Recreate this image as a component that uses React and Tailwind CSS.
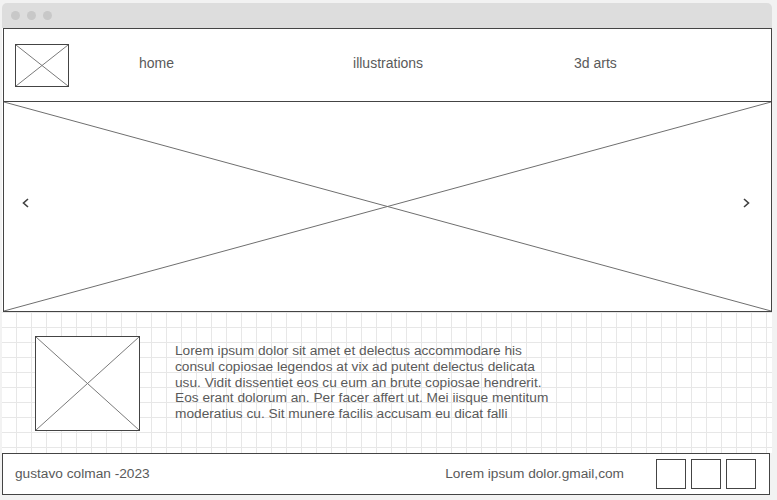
import React from 'react';

const gridBg =
  'bg-[linear-gradient(to_right,#e7e7e7_1px,transparent_1px),linear-gradient(to_bottom,#e7e7e7_1px,transparent_1px)] bg-[size:15px_15px] bg-[position:-1px_0]';

function Cross({ className, stroke = '#7a7a7a' }) {
  return (
    <svg className={className} viewBox="0 0 100 100" preserveAspectRatio="none">
      <line x1="0" y1="0" x2="100" y2="100" stroke={stroke} strokeWidth="1" vectorEffect="non-scaling-stroke" />
      <line x1="100" y1="0" x2="0" y2="100" stroke={stroke} strokeWidth="1" vectorEffect="non-scaling-stroke" />
    </svg>
  );
}

function Chevron({ dir }) {
  const points = dir === 'left' ? '6,1 1.5,5 6,9' : '1,1 5.5,5 1,9';
  return (
    <svg width="7" height="10" viewBox="0 0 7 10">
      <polyline points={points} fill="none" stroke="#3f3f3f" strokeWidth="1.6" />
    </svg>
  );
}

export default function App() {
  const lorem = [
    'Lorem ipsum dolor sit amet et delectus accommodare his',
    'consul copiosae legendos at vix ad putent delectus delicata',
    'usu. Vidit dissentiet eos cu eum an brute copiosae hendrerit.',
    'Eos erant dolorum an. Per facer affert ut. Mei iisque mentitum',
    'moderatius cu. Sit munere facilis accusam eu dicat falli',
  ];

  return (
    <div className="w-[777px] h-[500px] bg-[#f2f2f2] overflow-hidden font-['Liberation_Sans',Arial,sans-serif]">
      <div className="ml-[2px] pt-[3px] w-[770px]">
        {/* title bar */}
        <div className="h-[25px] rounded-t-[5px] bg-[#dddddd] flex items-center pl-[9px] gap-[7px]">
          <span className="w-[9px] h-[9px] rounded-full bg-[#c8c8c8]" />
          <span className="w-[9px] h-[9px] rounded-full bg-[#c8c8c8]" />
          <span className="w-[9px] h-[9px] rounded-full bg-[#c8c8c8]" />
        </div>

        <div className="bg-white">
          {/* header */}
          <header className="ml-px w-[769px] h-[74px] border border-[#444] bg-white flex items-center pl-[11px] text-[14px] text-[#5a5a5a]">
            <div className="w-[54px] h-[43px] border border-[#444] shrink-0">
              <Cross className="w-full h-full" />
            </div>
            <div className="flex items-center pb-[4px]">
              <span className="ml-[70px]">home</span>
              <span className="ml-[179px]">illustrations</span>
              <span className="ml-[151px]">3d arts</span>
            </div>
          </header>

          {/* hero */}
          <section className="relative ml-px w-[769px] h-[210px] border-x border-b border-[#444] bg-white">
            <Cross className="absolute inset-0 w-full h-full" stroke="#6f6f6f" />
            <div className="relative h-full flex items-center justify-between pl-[18px] pr-[21px] pb-[7px]">
              <Chevron dir="left" />
              <Chevron dir="right" />
            </div>
          </section>
        </div>

        {/* content */}
        <section className={`h-[141px] flex items-start pl-[33px] pt-[24px] bg-white ${gridBg}`}>
          <div className="w-[105px] h-[95px] border border-[#444] bg-white shrink-0">
            <Cross className="w-full h-full" />
          </div>
          <div className="ml-[35px] mt-[7px] text-[13.7px] leading-[15.8px] text-[#5a5a5a]">
            {lorem.map((line) => (
              <div key={line}>{line}</div>
            ))}
          </div>
        </section>

        {/* footer */}
        <footer className="w-[768px] h-[42px] border border-[#444] bg-white flex items-center pl-[12px] pr-[13px] text-[13.7px] text-[#5a5a5a]">
          <span>gustavo colman -2023</span>
          <span className="ml-auto mr-[32px]">Lorem ipsum dolor.gmail,com</span>
          <div className="flex gap-[5px]">
            <div className="w-[30px] h-[30px] border border-[#444]" />
            <div className="w-[30px] h-[30px] border border-[#444]" />
            <div className="w-[30px] h-[30px] border border-[#444]" />
          </div>
        </footer>
      </div>
    </div>
  );
}
